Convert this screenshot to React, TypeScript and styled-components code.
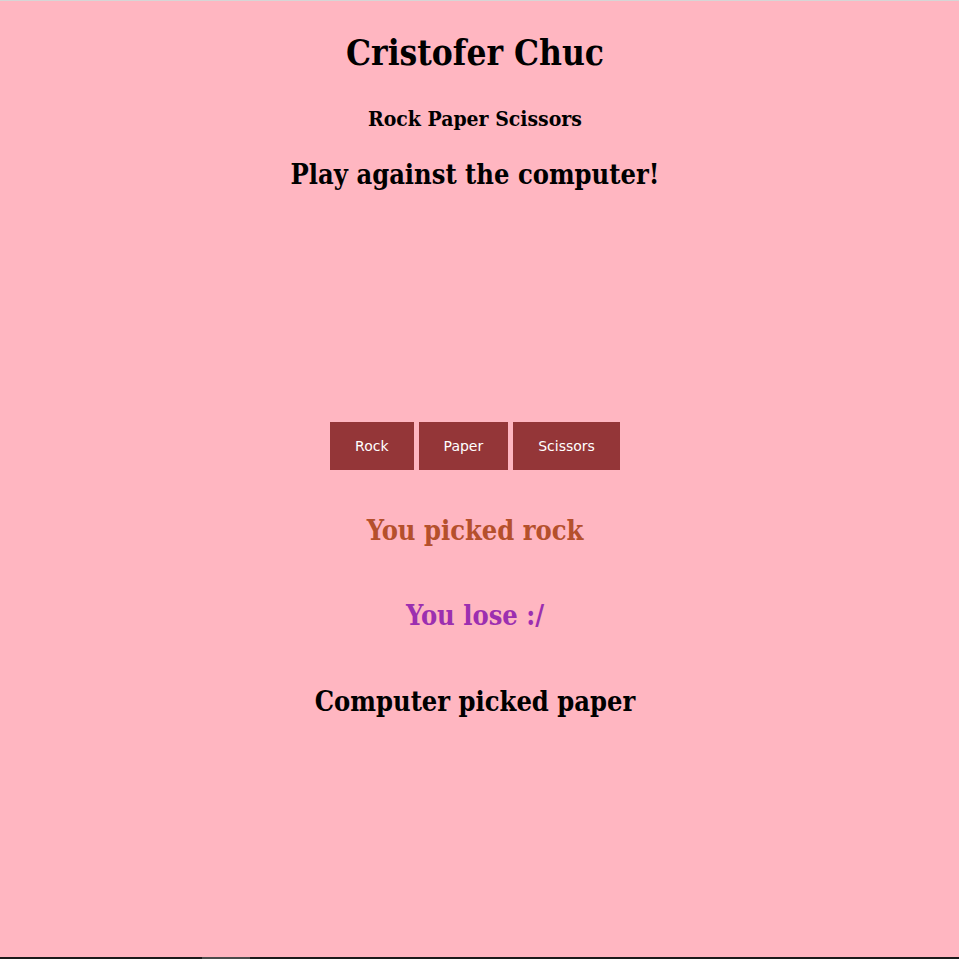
import React from "react";
import styled, { createGlobalStyle } from "styled-components";

const Global = createGlobalStyle`
  html, body { margin: 0; padding: 0; background: #ffb6c1; }
  #root { min-height: 100vh; }
`;

const Page = styled.div`
  min-height: 100vh;
  box-sizing: border-box;
  display: flex;
  flex-direction: column;
  background: #ffb6c1;
  border-top: 1px solid #d6d6d6;
  font-family: "DejaVu Serif Condensed", "DejaVu Serif", serif;
  font-stretch: condensed;
  font-weight: bold;
  color: #000;
`;

const Main = styled.main`
  flex: 1;
  display: flex;
  flex-direction: column;
  align-items: center;
  text-align: center;
  padding-right: 9px;
`;

const Heading = styled.div<{ $size: number; $color?: string; $mt: number }>`
  font-size: ${(p) => p.$size}px;
  color: ${(p) => p.$color || "#000"};
  margin: ${(p) => p.$mt}px 0 0;
  line-height: 1.2;
`;

const Buttons = styled.div`
  margin-top: 230px;
  display: flex;
  gap: 5px;
`;

const Button = styled.button`
  height: 48px;
  padding: 0 25px;
  border: none;
  background: #943638;
  color: #fff;
  font-family: "DejaVu Sans", sans-serif;
  font-size: 14px;
  cursor: pointer;
`;

const Bottom = styled.div`
  height: 2px;
  background: #1b1b1b;
  display: flex;
`;

const BottomThumb = styled.div`
  margin-left: 202px;
  width: 48px;
  background: #4b4b4b;
`;

export default function App() {
  return (
    <>
      <Global />
      <Page>
        <Main>
          <Heading as="h1" $size={35} $mt={31}>Cristofer Chuc</Heading>
          <Heading as="h3" $size={21} $mt={32}>Rock Paper Scissors</Heading>
          <Heading as="h2" $size={27} $mt={28}>Play against the computer!</Heading>
          <Buttons>
            <Button>Rock</Button>
            <Button>Paper</Button>
            <Button>Scissors</Button>
          </Buttons>
          <Heading $size={27} $mt={45} $color="#b5502c">You picked rock</Heading>
          <Heading $size={27} $mt={53} $color="#9c2fb0">You lose :/</Heading>
          <Heading $size={27} $mt={54}>Computer picked paper</Heading>
        </Main>
        <Bottom>
          <BottomThumb />
        </Bottom>
      </Page>
    </>
  );
}
